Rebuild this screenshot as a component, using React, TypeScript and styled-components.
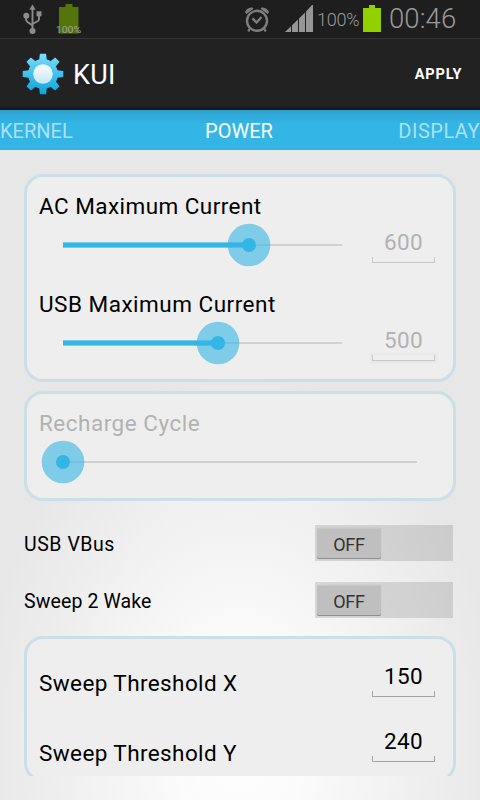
import React from 'react';
import styled, { createGlobalStyle } from 'styled-components';

const Global = createGlobalStyle`
  * { box-sizing: border-box; }
  html, body { margin: 0; padding: 0; }
  body { font-family: Roboto, "Noto Sans", sans-serif; background: #e7e7e7; }
`;

const Screen = styled.div`
  width: 480px;
  height: 800px;
  overflow: hidden;
  display: flex;
  flex-direction: column;
`;

const StatusBar = styled.div`
  height: 38px;
  flex: none;
  background: #1e1e1e;
  display: flex;
  align-items: flex-start;
  justify-content: space-between;
  padding: 0 24px 0 22px;
  color: #9a9a9a;
`;

const StatusGroup = styled.div`
  display: flex;
  height: 38px;
  align-items: flex-start;
`;

const Glyph = styled.svg<{ $left?: number; $top?: number }>`
  display: block;
  flex: none;
  margin-left: ${(p) => p.$left ?? 0}px;
  margin-top: ${(p) => p.$top ?? 0}px;
`;

const Percent = styled.span`
  width: 45px;
  margin-left: 3px;
  line-height: 39px;
  font-size: 18px;
  font-weight: 300;
  letter-spacing: -0.2px;
  white-space: nowrap;
`;

const Clock = styled.span`
  width: 67px;
  margin-left: 8px;
  line-height: 38px;
  font-size: 27.5px;
  font-weight: 300;
  letter-spacing: 0.1px;
  white-space: nowrap;
`;

const ActionBar = styled.header`
  height: 72px;
  flex: none;
  display: flex;
  align-items: center;
  padding: 0 18px 1px 22px;
  color: #fff;
  background: linear-gradient(#222 0 67px, #181818 69px);
  border-top: 1px solid #333;
`;

const Title = styled.h1`
  margin: 2px 0 0 9px;
  font-size: 27px;
  font-weight: 400;
  line-height: 32px;
  letter-spacing: 0.3px;
  flex: 1;
`;

const Apply = styled.button`
  border: 0;
  padding: 0;
  background: none;
  color: #fff;
  font: 700 14.5px/20px Roboto, sans-serif;
  letter-spacing: 0.9px;
  margin: 2px -0.5px 0 0;
`;

const Tabs = styled.nav`
  height: 40px;
  flex: none;
  display: flex;
  justify-content: space-between;
  background: linear-gradient(#2e9fcb 0, #31a9d9 4px, #33b5e5 14px);
`;

const Tab = styled.span<{ $active?: boolean; $spacing?: number }>`
  color: ${(p) => (p.$active ? '#fff' : 'rgba(255, 255, 255, 0.6)')};
  font-size: 20px;
  line-height: 43px;
  letter-spacing: ${(p) => p.$spacing ?? 0}px;
  margin-left: ${(p) => (p.$active ? 7 : 0)}px;
`;

const Page = styled.main`
  height: 650px;
  padding: 24px 24px 24px;
  background: radial-gradient(ellipse 262px 370px at 240px 590px, #fff 0, #fbfbfb 25%, #e7e7e7 100%);
`;

const Scroller = styled.div`
  height: 602px;
  overflow: hidden;
`;

const Card = styled.section<{ $height: number; $gap?: number }>`
  height: ${(p) => p.$height}px;
  margin-bottom: ${(p) => p.$gap ?? 0}px;
  border: 3px solid #cbdfe9;
  border-radius: 19px;
  background: #eee;
  padding: 0 18px 0 12px;
`;

const Setting = styled.div`
  padding-top: 15px;
  height: 98px;
`;

const Label = styled.div<{ $muted?: boolean; $size?: number; $spacing?: number }>`
  font-size: ${(p) => p.$size ?? 22.5}px;
  line-height: 28px;
  letter-spacing: ${(p) => p.$spacing ?? 0.45}px;
  color: ${(p) => (p.$muted ? '#b2b2b2' : '#000')};
  white-space: nowrap;
`;

const SliderLine = styled.div`
  display: flex;
  justify-content: space-between;
  align-items: flex-start;
  height: 50px;
`;

const Field = styled.div<{ $muted?: boolean; $focused?: boolean }>`
  width: 63px;
  height: 36px;
  margin-top: ${(p) => (p.$muted ? 7 : 0)}px;
  display: flex;
  flex-direction: column;
  justify-content: space-between;
  text-align: center;
  font-size: 22.5px;
  line-height: 30px;
  letter-spacing: 0.4px;
  color: ${(p) => (p.$muted ? '#b2b2b2' : '#000')};

  &::after {
    content: '';
    height: 6px;
    border: 1px solid ${(p) => (p.$muted ? '#c8c8c8' : '#a3a3a3')};
    border-top: 0;
    box-shadow: ${(p) => (p.$focused ? '0 0 2px 2px #e8e8e8' : 'none')};
  }
`;

const SwitchRow = styled.div`
  height: 57px;
  display: flex;
  align-items: center;
  justify-content: space-between;
  padding-right: 3px;

  & > :first-child {
    padding-top: 4px;
  }
`;

const Switch = styled.div`
  width: 138px;
  height: 36px;
  padding: 3px 2px 2px;
  background: rgba(0, 0, 0, 0.118);
`;

const SwitchThumb = styled.div`
  width: 64px;
  height: 31px;
  border-radius: 2px;
  background: #bfbfbf;
  box-shadow: inset 0 -1px #909090, inset 0 1px #c8c8c8, 0 0 1px #aaa;
  color: #333;
  font-size: 18px;
  line-height: 33px;
  letter-spacing: -0.2px;
  text-align: center;
`;

const ThresholdRow = styled.div<{ $top: number; $labelTop: number }>`
  display: flex;
  justify-content: space-between;
  padding-top: ${(p) => p.$top}px;

  & > :first-child {
    margin-top: ${(p) => p.$labelTop}px;
  }
`;

function Slider({ length, value }: { length: number; value: number }) {
  const x = 24 + value;
  return (
    <Glyph width={length + 48} height={48} viewBox={`0 0 ${length + 48} 48`} $top={1}>
      <rect x="24" y="23" width={length} height="2" fill="#d1d1d1" />
      {value > 0 && (
        <>
          <rect x="24" y="21" width={value} height="6" fill="#7bcbea" />
          <rect x="24" y="22" width={value} height="4" fill="#33b5e5" />
        </>
      )}
      <circle cx={x} cy="24" r="21.3" fill="#33b5e5" fillOpacity="0.6" />
      <circle cx={x} cy="24" r="7" fill="#33b5e5" />
    </Glyph>
  );
}

function UsbIcon() {
  return (
    <Glyph width="21" height="30" viewBox="0 0 21 30" $top={4} $left={1} fill="#8c8c8c" stroke="#8c8c8c">
      <path d="M9.500 5v21M9.500 21.500L4.500 18Q3 17 3 15v-3M9.500 20l5.500-3Q16 16.300 16 15v-5" fill="none" strokeWidth="1.900" />
      <path d="M9.500 0.800L12.200 5.500H6.800z" strokeWidth="0.500" />
      <circle cx="3.300" cy="11.700" r="3" stroke="none" />
      <rect x="13.500" y="7.300" width="5" height="5" stroke="none" />
      <circle cx="9.500" cy="27" r="3" stroke="none" />
    </Glyph>
  );
}

function ChargeIcon() {
  return (
    <Glyph width="28" height="32" viewBox="0 0 28 32" $left={11} $top={3}>
      <path d="M10.500 1h7v3h6v26.500H4V4h6.500z" fill="#55750b" />
      <text x="13.500" y="29.500" fill="#a3a396" fontSize="9.800" textAnchor="middle" textLength="25.500" lengthAdjust="spacingAndGlyphs">100%</text>
    </Glyph>
  );
}

function AlarmIcon() {
  return (
    <Glyph width="26" height="27" viewBox="0 0 26 27" $top={6} fill="none" stroke="#7d7d7d">
      <circle cx="13" cy="14.800" r="10" strokeWidth="2.400" />
      <path d="M8.500 12.300l4 4.200 5-5.500" strokeWidth="2.400" />
      <path d="M1 6.500Q2 2 8 1.200L9.500 2.800 2.500 8zM25 6.500Q24 2 18 1.200L16.500 2.800 23.500 8z" fill="#7d7d7d" stroke="none" />
      <path d="M5.500 23l-1.200 2.500M20.500 23l1.200 2.500" strokeWidth="2.200" />
    </Glyph>
  );
}

function SignalIcon() {
  return (
    <Glyph width="29" height="28" viewBox="0 0 29 28" $left={15} $top={5} fill="#969696">
      <path d="M0 27l6-5.800V27zM7 20.300L13 14.500V27H7zM14 13.500L20 7.500V27h-6zM21 6.500L27 0h1v27h-7z" />
    </Glyph>
  );
}

function GearIcon() {
  const teeth = [0, 45, 90, 135, 180, 225, 270, 315];
  return (
    <Glyph width="42" height="42" viewBox="-21 -21 42 42">
      <defs>
        <linearGradient id="gear" gradientUnits="userSpaceOnUse" x1="0" y1="-20" x2="0" y2="20">
          <stop offset="0" stopColor="#7bdcff" />
          <stop offset="1" stopColor="#0aa5de" />
        </linearGradient>
        <linearGradient id="hub" x1="0" y1="0" x2="0" y2="1">
          <stop offset="0" stopColor="#fbfdff" />
          <stop offset="1" stopColor="#c5e7f7" />
        </linearGradient>
        <mask id="gearShape" maskUnits="userSpaceOnUse" x="-21" y="-21" width="42" height="42">
          <circle r="15" fill="#fff" />
          {teeth.map((angle) => (
            <path key={angle} d="M-3.100-20.300h6.200l0.900 8h-8z" transform={`rotate(${angle})`} fill="#fff" />
          ))}
        </mask>
      </defs>
      <rect x="-21" y="-21" width="42" height="42" fill="url(#gear)" mask="url(#gearShape)" />
      <circle r="9.800" fill="url(#hub)" />
    </Glyph>
  );
}

export default function App() {
  return (
    <Screen>
      <Global />
      <StatusBar>
        <StatusGroup>
          <UsbIcon />
          <ChargeIcon />
        </StatusGroup>
        <StatusGroup>
          <AlarmIcon />
          <SignalIcon />
          <Percent>100%</Percent>
          <Glyph width="18" height="27" viewBox="0 0 18 27" $top={5} $left={1}>
            <path d="M6 0h6v3h6v24H0V3h6z" fill="#92d000" />
          </Glyph>
          <Clock>00:46</Clock>
        </StatusGroup>
      </StatusBar>
      <ActionBar>
        <GearIcon />
        <Title>KUI</Title>
        <Apply>APPLY</Apply>
      </ActionBar>
      <Tabs>
        <Tab>KERNEL</Tab>
        <Tab $active>POWER</Tab>
        <Tab $spacing={0.5}>DISPLAY</Tab>
      </Tabs>
      <Page>
        <Scroller>
          <Card $height={208} $gap={9}>
            <Setting>
              <Label>AC Maximum Current</Label>
              <SliderLine>
                <Slider length={279} value={186} />
                <Field $muted>600</Field>
              </SliderLine>
            </Setting>
            <Setting>
              <Label $spacing={0.5}>USB Maximum Current</Label>
              <SliderLine>
                <Slider length={279} value={155} />
                <Field $muted $focused>500</Field>
              </SliderLine>
            </Setting>
          </Card>
          <Card $height={110} $gap={13}>
            <Setting>
              <Label $muted $spacing={0.5}>Recharge Cycle</Label>
              <Slider length={354} value={0} />
            </Setting>
          </Card>
          <SwitchRow>
            <Label $size={19.5} $spacing={0.55}>USB VBus</Label>
            <Switch><SwitchThumb>OFF</SwitchThumb></Switch>
          </SwitchRow>
          <SwitchRow>
            <Label $size={19.5} $spacing={0.12}>Sweep 2 Wake</Label>
            <Switch><SwitchThumb>OFF</SwitchThumb></Switch>
          </SwitchRow>
          <ThresholdCard $height={146}>
            <ThresholdRow $top={22} $labelTop={8}>
              <Label $spacing={0.4}>Sweep Threshold X</Label>
              <Field>150</Field>
            </ThresholdRow>
            <ThresholdRow $top={29} $labelTop={13}>
              <Label $spacing={0.4}>Sweep Threshold Y</Label>
              <Field>240</Field>
            </ThresholdRow>
          </ThresholdCard>
        </Scroller>
      </Page>
    </Screen>
  );
}

const ThresholdCard = styled(Card)`
  margin-top: 8px;
`;
